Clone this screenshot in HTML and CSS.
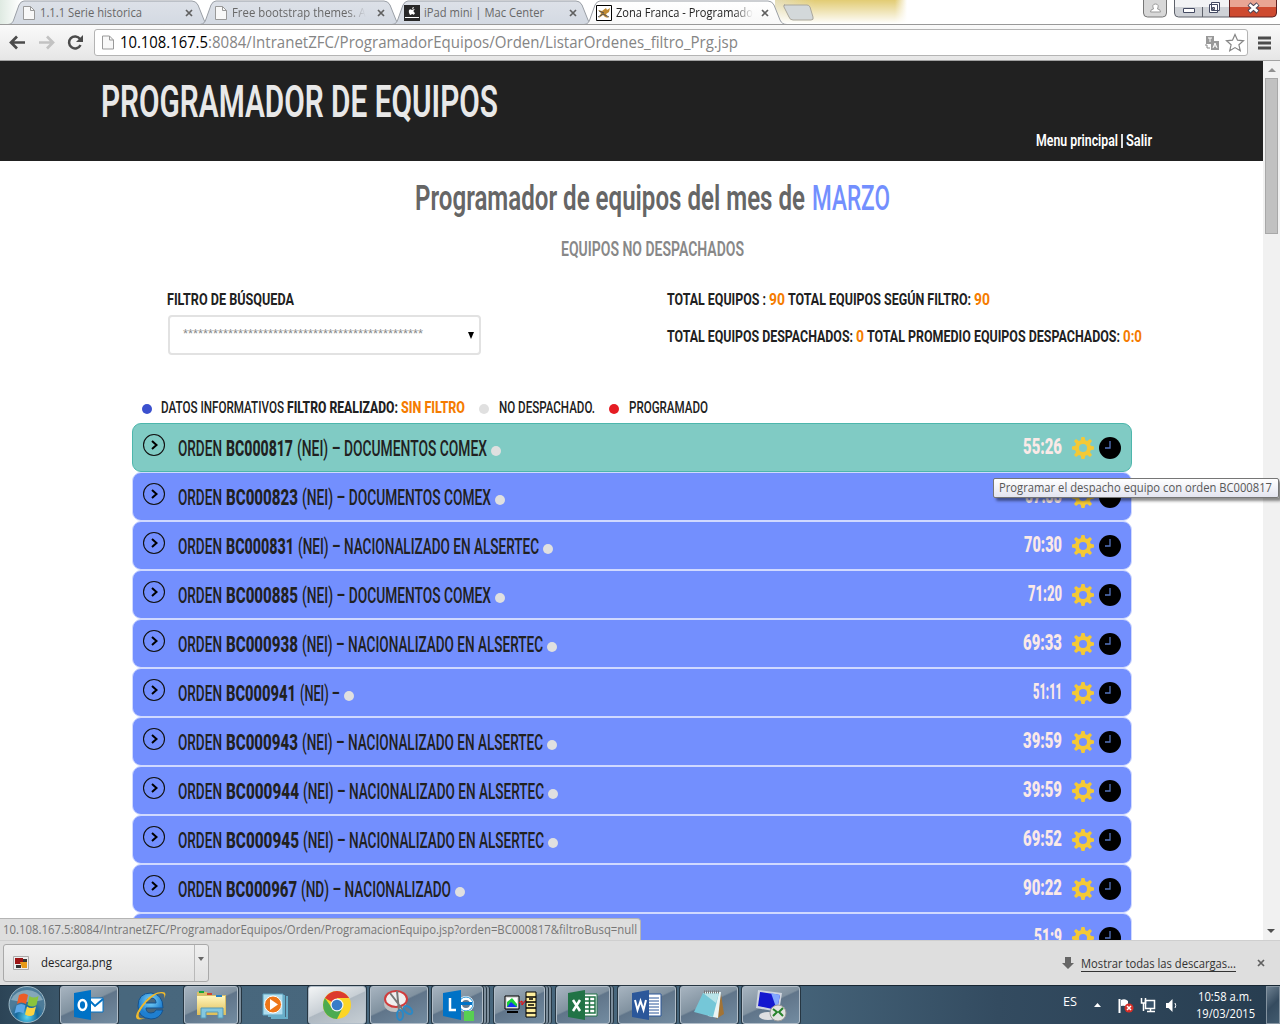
FILE: index.html
```html
<!DOCTYPE html>
<html lang="es">
<head>
<meta charset="utf-8">
<title>Zona Franca - Programador de equipos</title>
<link rel="stylesheet" href="styles.css">
</head>
<body>
<svg class="defs" width="0" height="0">
  <defs>
    <linearGradient id="tabOff" x2="0" y2="1"><stop stop-color="#dde1e8"/><stop offset="1" stop-color="#d3d9e2"/></linearGradient>
    <linearGradient id="tabOn" x2="0" y2="1"><stop stop-color="#ffffff"/><stop offset="1" stop-color="#f8f8f8"/></linearGradient>
    <linearGradient id="gold" x2="0" y2="1"><stop stop-color="#fff6bd"/><stop offset="1" stop-color="#dfbd56"/></linearGradient>
    <radialGradient id="orb" cy=".85"><stop stop-color="#59d5f2"/><stop offset=".6" stop-color="#17699c"/><stop offset="1" stop-color="#4d7b98"/></radialGradient>
    <radialGradient id="ie" cy=".3"><stop stop-color="#7fd8fb"/><stop offset="1" stop-color="#1f7fd0"/></radialGradient>
    <symbol id="page" viewBox="0 0 12 14"><path d="M.5.5h7l4 4v9H.5z" fill="#f8f8f8" stroke="#999"/><path d="M7.5.5v4h4" fill="none" stroke="#999"/></symbol>
    <symbol id="x" viewBox="0 0 8 8"><path d="M1 1l6 6M7 1L1 7" stroke="#606060" stroke-width="1.7"/></symbol>
    <symbol id="tabshape" viewBox="0 0 206 25"><path d="M0 24.5C4 24 5 22 6 19L11 5Q13 1 16 1H184Q188 1 190 5L196 20Q198 24.5 203 24.5" stroke="#9a9fa6"/></symbol>
    <symbol id="arrow" viewBox="0 0 24 24"><circle cx="12" cy="12" r="10.5" fill="none" stroke="#111" stroke-width="1.1"/><path d="M10 8l4.5 4-4.5 4" fill="none" stroke="#000" stroke-width="2"/></symbol>
    <symbol id="gear" viewBox="-11 -11 22 22"><path fill="#f4c936" fill-rule="evenodd" d="M-1.500-11H1.500L2.300-7.700 4.200-7 7-9 9-7 7-4.200 7.700-2.300 11-1.500V1.500L7.700 2.300 7 4.200 9 7 7 9 4.200 7 2.300 7.700 1.500 11H-1.500L-2.300 7.700-4.200 7-7 9-9 7-7 4.200-7.700 2.300-11 1.500V-1.500L-7.700-2.300-7-4.200-9-7-7-9-4.200-7-2.300-7.700ZM4 0A4 4 0 1 0-4 0 4 4 0 1 0 4 0Z"/></symbol>
    <symbol id="clock" viewBox="0 0 22 22"><circle cx="11" cy="11" r="11"/><path d="M11 4v7H6" fill="none" stroke="currentColor" stroke-width="1.3"/></symbol>
  </defs>
</svg>
<div class="window">
  <header class="tabstrip">
    <div class="tab"><svg class="shape" width="206" height="25"><use href="#tabshape"/></svg><div class="tab-body"><svg width="12" height="14"><use href="#page"/></svg><span class="fit" data-w="102">1.1.1 Serie historica</span><svg class="close" width="8" height="8"><use href="#x"/></svg></div></div>
    <div class="tab"><svg class="shape" width="206" height="25"><use href="#tabshape"/></svg><div class="tab-body"><svg width="12" height="14"><use href="#page"/></svg><span class="fit fade" data-w="134">Free bootstrap themes. A</span><svg class="close" width="8" height="8"><use href="#x"/></svg></div></div>
    <div class="tab"><svg class="shape" width="206" height="25"><use href="#tabshape"/></svg><div class="tab-body wide-icon"><svg width="16" height="16"><path fill="#282828" d="M0 0h16v16H0z"/><path fill="#fff" d="M8 5c-3-2-4 1-2.500 4 1 2 2 0 2.500 0s2 2 3-1C9 7 9 5 11 5 10 3.500 9 4.500 8 5zM8 4q0-2 2-2 0 2-2 2zM1 12h14v1H1z"/></svg><span class="fit" data-w="120">iPad mini | Mac Center</span><svg class="close" width="8" height="8"><use href="#x"/></svg></div></div>
    <div class="tab active"><svg class="shape" width="206" height="25"><use href="#tabshape"/></svg><div class="tab-body wide-icon"><svg width="16" height="16"><path fill="#fff" stroke="#000" d="M.5.5h15v15H.500z"/><path fill="#c08a32" d="M2 5l4 1 4-3 1 2 3-2-1 4-3 2 2 4-3-1-2-2-4 3 2-5z"/><path d="M2 12l5-3 6 3M3 6l5 2" stroke="#555" fill="none"/></svg><span class="fit fade" data-w="137">Zona Franca - Programado</span><svg class="close" width="8" height="8"><use href="#x"/></svg></div></div>
    <svg class="newtab" width="34" height="25"><path d="M3 5h23q2 0 3 2l3 10q1 3-2 3H12q-3 0-4-3L3 7q-1-2 1-2z" fill="#d3d8da" stroke="#aaa79c"/></svg>
    <div class="glow"></div>
    <svg class="controls" width="151" height="19">
      <path d="M1.500 0v13q0 4 4 4h15q4 0 4-4V0" fill="#d8d8d8" stroke="#777"/><path d="M8.500 12q0-3 3-3-2-5 2-5t2 5q3 0 3 3z" fill="#fff" stroke="#999"/>
      <path d="M32.500 0v13q0 4 4 4h51V0z" fill="#cfd2d7" stroke="#5e626b"/><path d="M60.500 0v17" stroke="#5e626b"/><path d="M33 0h54v7H33z" fill="#f2f3f5"/>
      <path d="M87.500 0v17h43q4 0 4-4V0z" fill="#ce4a30" stroke="#5e2020"/><path d="M88 0h46v7H88z" fill="#e9a594"/>
      <path d="M41.500 8.500h11v4h-11z" fill="#fff" stroke="#444a62"/><path d="M69.500 2.500h8v8h-8zM67.500 4.500h8v8h-8z" fill="#fff" stroke="#444a62"/><path d="M70.500 7.500h2v2h-2z" fill="#aaa" stroke="#444a62"/>
      <path d="M107 4l9 8M116 4l-9 8" stroke="#4b4557" stroke-width="4.500"/><path d="M107.500 4.500l8 7M115.500 4.500l-8 7" stroke="#fff" stroke-width="2.500"/>
    </svg>
  </header>
  <nav class="toolbar">
    <svg class="navicons" width="86" height="34"><path d="M25 16.500H12M17 10.500l-6 6 6 6" fill="none" stroke="#4b4b4b" stroke-width="2.700"/><path d="M39 16.500h13M47 10.500l6 6-6 6" fill="none" stroke="#c2c2c2" stroke-width="2.700"/><path d="M80 13a6 6 0 1 0 .5 6" fill="none" stroke="#4b4b4b" stroke-width="2.500"/><path d="M83 9v7h-7z" fill="#4b4b4b"/></svg>
    <div class="address">
      <svg width="12" height="15"><use href="#page"/></svg>
      <div class="url"><span class="fit host" data-w="88">10.108.167.5</span><span class="fit" data-w="530">:8084/IntranetZFC/ProgramadorEquipos/Orden/ListarOrdenes_filtro_Prg.jsp</span></div>
      <svg class="addr-icons" width="42" height="20"><path d="M2 3h8v8H2zM7 8h8v9H7z" fill="#999"/><path d="M4 5h4M6 5v4M9 15l2-5 2 5M10 13h2" stroke="#fff" fill="none"/><path d="M1 12h2v3h3" stroke="#888" fill="none"/><path d="M31 1.500l2.500 5.700 6 .6-4.600 4 1.400 6L31 14.600l-5.300 3.200 1.400-6-4.600-4 6-.6z" fill="#fff" stroke="#858585" stroke-width="1.200"/></svg>
    </div>
    <svg width="13" height="14"><path d="M0 2h13M0 7h13M0 12h13" stroke="#4c4c4c" stroke-width="2.800"/></svg>
  </nav>

  <main class="viewport">
    <div class="page">
      <div class="banner">
        <h1 class="fit" data-w="397">PROGRAMADOR DE EQUIPOS</h1>
        <div class="menu"><span class="fit" data-w="82">Menu principal</span><i></i><span class="fit" data-w="26">Salir</span></div>
      </div>
      <h2 class="month"><span class="fit" data-w="390">Programador de equipos del mes de</span><span class="fit blue" data-w="78">MARZO</span></h2>
      <h3 class="subtitle"><span class="fit" data-w="183">EQUIPOS NO DESPACHADOS</span></h3>
      <section class="summary">
        <div class="filter">
          <span class="fit" data-w="127">FILTRO DE BÚSQUEDA</span>
          <div class="select"><span class="fit" data-w="240">************************************************</span><svg width="6" height="7"><path d="M0 0h6L3 7z"/></svg></div>
        </div>
        <div class="totals">
          <p><span class="fit" data-w="99">TOTAL EQUIPOS :</span><span class="fit orange" data-w="16">90</span><span class="fit" data-w="183">TOTAL EQUIPOS SEGÚN FILTRO:</span><span class="fit orange" data-w="16">90</span></p>
          <p><span class="fit" data-w="186">TOTAL EQUIPOS DESPACHADOS:</span><span class="fit orange" data-w="8">0</span><span class="fit" data-w="253">TOTAL PROMEDIO EQUIPOS DESPACHADOS:</span><span class="fit orange" data-w="19">0:0</span></p>
        </div>
      </section>
      <div class="legend">
        <b class="dot info"></b><span class="fit" data-w="123">DATOS INFORMATIVOS</span><span class="fit strong" data-w="111">FILTRO REALIZADO:</span><span class="fit strong orange" data-w="64">SIN FILTRO</span>
        <b class="dot none"></b><span class="fit" data-w="96">NO DESPACHADO.</span>
        <b class="dot done"></b><span class="fit" data-w="79">PROGRAMADO</span>
      </div>
      <div class="orders" id="orders"></div>
    </div>
    <div class="scrollbar"><svg width="17" height="17"><path d="M5 11h8L9 7z" fill="#909090"/></svg><div class="thumb"></div><svg class="down" width="17" height="17"><path d="M4 6h8l-4 4z" fill="#505050"/></svg></div>
    <div class="status"><span class="fit" data-w="634">10.108.167.5:8084/IntranetZFC/ProgramadorEquipos/Orden/ProgramacionEquipo.jsp?orden=BC000817&amp;filtroBusq=null</span></div>
    <div class="tooltip"><span class="fit" data-w="273">Programar el despacho equipo con orden BC000817</span></div>
  </main>

  <div class="downloads">
    <div class="download"><svg width="16" height="14"><path d="M.5.5h15v13H.500z" fill="#eee" stroke="#aaa"/><path d="M2 2h8v6H2z" fill="#9c1414"/><path d="M7 6h7v6H9z" fill="#e79a19"/><path d="M3 9h5v3H3zM10 3h4v3h-4z" fill="#333"/></svg><span class="fit" data-w="71">descarga.png</span><div class="split"><svg width="6" height="4"><path d="M0 0h6L3 4z" fill="#666"/></svg></div></div>
    <div class="showall"><svg width="12" height="12"><path d="M3 0h6v6h3l-6 6-6-6h3z" fill="#666"/></svg><span class="fit link" data-w="155">Mostrar todas las descargas...</span><svg class="closebar" width="8" height="8"><use href="#x"/></svg></div>
  </div>

  <footer class="taskbar">
    <svg class="start" width="60" height="39" viewBox="0 985 60 39"><circle cx="27" cy="1003.500" r="18" fill="url(#orb)" stroke="#9fb9c6"/><path d="M11 999a17 15 0 0 1 32 0q-16 4-32 0z" fill="#b5ccd6" opacity=".55"/><path d="M19 994q5-3 9 0l-2 9q-5-3-9 0z" fill="#ee5d28"/><path d="M29.500 995q4 3 9 0l-2 9q-4 3-9 0z" fill="#8bc43c"/><path d="M16.500 1004.500q5-3 9 0l-2 8q-4-3-9 0z" fill="#5da8e8"/><path d="M27 1005.500q4 3 9 0l-2 8q-4 3-9 0z" fill="#fbd342"/></svg>
    <div class="apps">
      <div class="app"><div class="btn"><svg width="32" height="32"><path d="M14 9h16v14H14z" fill="#fff" stroke="#0072c6"/><path d="M15 10l7 7 8-7" fill="none" stroke="#0072c6" stroke-width="2"/><path d="M1 4l17-3v30L1 28z" fill="#0072c6"/><ellipse cx="9.500" cy="16" rx="3.800" ry="5" fill="none" stroke="#fff" stroke-width="2.500"/></svg></div></div>
      <div class="app"><div class="btn plain"><svg class="explorer" width="34" height="34"><path d="M29 20H12q0 5 5 5 4 0 5-3h7q-3 9-12 9-13-1-13-13Q4 5 17 5q12 1 12 15zM12 15h10q0-5-5-5t-5 5z" fill="url(#ie)" stroke="#14538f"/><path d="M30 11q4-8-3-7-7 0-15 8Q3 22 2 28q0 6 9 2-8 2-6-5Q12 12 23 6q9-3 7 5z" fill="#efb92d"/></svg></div></div>
      <div class="app"><div class="btn stack"><svg width="34" height="32"><path d="M3 3h10l2 3h17v20H3z" fill="#d9bf68"/><path d="M3 7h28v19H3z" fill="url(#gold)"/><path d="M5 2h5v2H5z" fill="#15a53a"/><path d="M13 4h5v2h-5z" fill="#cf4530"/><path d="M22 6h6v2h-6z" fill="#2681c6"/><path d="M7 29V19h22v10h-5v-6H12v6z" fill="#83c7df" stroke="#5599b8"/></svg></div></div>
      <div class="app"><div class="btn plain"><svg width="30" height="28"><path d="M3 3h20v21H3z" fill="#afdeef" stroke="#5ca1be"/><path d="M24 4v21H8M27 5v22H11" fill="none" stroke="#68aec9" stroke-width="2"/><circle cx="13" cy="13.500" r="8.500" fill="#ee7618" stroke="#fff"/><path d="M10 8l8 5.500-8 5.500z" fill="#fff"/></svg></div></div>
      <div class="app"><div class="btn lit"><svg width="30" height="30"><circle cx="15" cy="15" r="14" fill="#fcd526"/><path d="M15 15L2.900 8A14 14 0 0 1 27.100 8H15z" fill="#dc3b2d"/><path d="M2.900 8A14 14 0 0 0 15 29l5-10-10-1z" fill="#4cab50"/><circle cx="15" cy="15" r="6.500" fill="#f5f5f5"/><circle cx="15" cy="15" r="5.300" fill="#377cc8"/></svg></div></div>
      <div class="app"><div class="btn"><svg width="34" height="34"><ellipse cx="13" cy="16" rx="11" ry="8" fill="#c2c2c2"/><ellipse cx="14" cy="11" rx="11" ry="8" fill="#f0efef" stroke="#d03d3d" stroke-width="2"/><path d="M8 5l13 17M15 3l2 20" stroke="#777" stroke-width="2"/><ellipse cx="18" cy="27" rx="3" ry="5" fill="none" stroke="#2989c7" stroke-width="2"/><ellipse cx="26" cy="22" rx="3" ry="5" fill="none" stroke="#2989c7" stroke-width="2" transform="rotate(-48 26 22)"/></svg></div></div>
      <div class="app"><div class="btn stack3"><svg width="34" height="34"><circle cx="25" cy="16" r="6" fill="none" stroke="#fff" stroke-width="4"/><path d="M19 14h12v3H19" fill="#0072c6"/><circle cx="25" cy="16" r="7" fill="none" stroke="#2692d4"/><path d="M2 5l18-3v30L2 28z" fill="#0072c6"/><path d="M9 10v12h6" fill="none" stroke="#fff" stroke-width="2.500"/><path d="M23 23h10v10H23z" fill="#58cf52"/></svg></div></div>
      <div class="app"><div class="btn stack3"><svg width="34" height="30"><path d="M2 6h14v13H2z" fill="#ddd" stroke="#000"/><path d="M4 8h10v9H4z" fill="#fff"/><path d="M4 17V12l5-4 5 6v3z" fill="#1bd03c"/><path d="M8 12l6 5H4z" fill="#1232f5"/><path d="M4 22h11" stroke="#000" stroke-width="2"/><path d="M16 13l3-2v4l4-5" fill="none" stroke="red"/><path d="M23 2h10v25H23z" fill="#ffef9e" stroke="#000"/><path d="M23 7h10M23 12h10M23 18h10M23 23h10M26 9h4M25 15h6" stroke="#000" stroke-width="1.500"/></svg></div></div>
      <div class="app"><div class="btn stack"><svg width="32" height="32"><path d="M15 5h15v22H15z" fill="#fff" stroke="#217346"/><path d="M17 8h11v16H17zM17 12h11M17 16h11M17 20h11M22.500 8v16" stroke="#217346" stroke-width="1.500" fill="none"/><path d="M1 4l17-3v30L1 28z" fill="#217346"/><path d="M6 11l7 11M13 11L6 22" stroke="#fff" stroke-width="2.500"/></svg></div></div>
      <div class="app"><div class="btn"><svg width="32" height="32"><path d="M15 5h15v22H15z" fill="#fff" stroke="#2b579a"/><path d="M18 9h10M18 12h10M18 15h10M18 18h10M18 21h10M18 24h10" stroke="#2b579a"/><path d="M1 4l17-3v30L1 28z" fill="#2b579a"/><path d="M4 11l2.500 10L9.500 12l3 9L15 11" fill="none" stroke="#fff" stroke-width="2"/></svg></div></div>
      <div class="app"><div class="btn"><svg width="34" height="32"><path d="M29 5l3 20-8 5z" fill="#a27335"/><path d="M12 3h17l-3 26-10-2z" fill="#eaf4f4"/><path d="M11 4h16l-6 24L2 23z" fill="#75c7d8"/><path d="M11 4h16l-3 10z" fill="#b9e3e8"/><path d="M12 3h16" stroke="#777" stroke-width="3" stroke-dasharray="1 1"/></svg></div></div>
      <div class="app"><div class="btn"><svg width="34" height="34"><ellipse cx="14" cy="28" rx="9" ry="4" fill="#dedfe2"/><path d="M4 2l24 3-3 19L2 20z" fill="#d0d6df"/><path d="M6 4l20 3-3 15L4 18z" fill="#1418cf"/><path d="M17 5l9 2-3 15z" fill="#83a8ff"/><circle cx="24" cy="25" r="8" fill="#e2e3df" stroke="#999"/><path d="M19 21l4 3-4 4M29 20l-4 4 4 4" fill="none" stroke="#268229" stroke-width="2"/></svg></div></div>
    </div>
    <div class="tray">
      <span class="fit" data-w="14">ES</span>
      <svg class="trayicons" width="90" height="20"><path d="M5 12h7L8.500 8z" fill="#fff"/><path d="M30.500 4v14" stroke="#fff" stroke-width="2"/><path d="M32 5q4-2 7 1v6q-4-2-7-1z" fill="#fff"/><circle cx="40" cy="13" r="4.500" fill="#d72e27"/><path d="M38 11l4 4M42 11l-4 4" stroke="#fff" stroke-width="1.500"/><path d="M56.500 5.500h9v8h-9zM58 16.500h8M61.500 14v3" stroke="#fff" stroke-width="1.500" fill="#38526a"/><path d="M52.500 3v5h4V3M54.500 8v8" stroke="#fff" stroke-width="1.500" fill="none"/><path d="M77 8h2.500l4-4v13l-4-4H77z" fill="#fff"/><path d="M86 8q1.500 2.500 0 5" stroke="#fff" fill="none"/></svg>
      <div class="datetime"><span class="fit" data-w="54">10:58 a.m.</span><span class="fit" data-w="59">19/03/2015</span></div>
      <div class="desktop"></div>
    </div>
  </footer>
</div>
<script src="app.js"></script>
</body>
</html>
```
FILE: styles.css
```css
* { box-sizing: border-box; }
body { margin: 0; overflow: hidden; font-family: "Open Sans", sans-serif; }
h1, h2, h3, p { margin: 0; }
svg { display: block; flex: none; overflow: visible; }
.defs { position: absolute; }
.fit { display: block; flex: none; }
.window { width: 1280px; height: 1024px; display: flex; flex-direction: column; overflow: hidden; background: #fff; }

.tabstrip { height: 25px; flex: none; display: flex; padding-left: 8px; background: linear-gradient(90deg, #dfeae2 0, #fff 20px, #fff); border-bottom: 1px solid #999; overflow: hidden; }
.tab { width: 192px; height: 25px; flex: none; display: grid; grid-template-columns: 192px; font-size: 11.8px; color: #686868; }
.tab > * { grid-area: 1 / 1; }
.shape { fill: url(#tabOff); }
.active { z-index: 2; color: #222; }
.active .shape { fill: url(#tabOn); }
.tab-body { z-index: 1; display: flex; align-items: flex-start; padding: 6px 7px 0 15px; gap: 5px; }
.wide-icon { padding: 5px 7px 0 12px; gap: 4px; }
.wide-icon .fit, .wide-icon .close { margin-top: 1px; }
.tab .close { margin: 3px 0 0 auto; }
.tab .wide-icon .close { margin-top: 4px; }
.fade { -webkit-mask-image: linear-gradient(90deg, #000 86%, transparent); mask-image: linear-gradient(90deg, #000 86%, transparent); }
.newtab { margin-left: 5px; z-index: 1; }
.glow { width: 340px; height: 24px; margin-left: -40px; background: linear-gradient(180deg, rgba(255,255,255,0), #fff), linear-gradient(90deg, #e5ddb5 0, #e2cc74 40px, #e2cc74 120px, #fff 132px); }
.controls { margin-left: auto; margin-right: -13px; }

.toolbar { height: 36px; flex: none; display: flex; align-items: center; padding-right: 9px; background: linear-gradient(#fafafa, #e6e6e6); border-bottom: 1px solid #a2a2a2; }
.navicons { margin-right: 8px; }
.address { height: 27px; flex: 1; margin-right: 10px; display: flex; align-items: center; padding: 0 1px 0 7px; border: 1px solid #b4b4b4; border-radius: 3px; background: #fff; }
.url { display: flex; margin-left: 6px; font-size: 15.500px; color: #858585; }
.host { color: #000; }
.addr-icons { margin-left: auto; }

.viewport { position: relative; height: 879px; flex: none; display: flex; overflow: hidden; }
.page { width: 1263px; font-family: Roboto, sans-serif; color: #212121; overflow: hidden; }
.banner { height: 100px; background: #212121; color: #e8e8e8; padding: 13px 111px 0 101px; display: flex; flex-direction: column; }
.banner h1 { font-size: 45px; font-weight: 600; height: 55px; }
.menu { align-self: flex-end; display: flex; gap: 3px; margin-top: 1px; font-size: 16.500px; font-weight: 600; color: #fff; }
.menu i { width: 2px; height: 14px; margin: 4px 0 0; background: #ddd; }
.month { display: flex; gap: 7px; padding: 16px 0 0 415px; height: 68px; font-size: 34.500px; font-weight: 600; color: #666; }
.blue { color: #738ffe; font-weight: 500; }
.subtitle { padding: 7px 0 0 561px; height: 55px; font-size: 21px; font-weight: 600; color: #888; }
.summary { display: flex; padding: 5px 0 0 167px; height: 113px; font-size: 17px; font-weight: 700; }
.filter { width: 500px; }
.select { width: 313px; height: 40px; margin: 6px 0 0 1px; padding: 0 5px 0 13px; border: 2px solid #e2e2e2; border-radius: 4px; display: flex; align-items: center; justify-content: space-between; font: 400 12px "Liberation Sans", sans-serif; }
.select .fit { color: #8a8a8a; margin-top: -2px; }
.totals p { display: flex; gap: 3px; height: 37px; }
.orange { color: #f57c00; }
.legend { height: 25px; padding: 0 0 0 142px; display: flex; gap: 3px; font-size: 17px; font-weight: 500; }
.legend .strong, .label .strong { font-weight: 800; }
.dot { display: block; flex: none; width: 10px; height: 10px; border-radius: 50%; background: #e0e0e0; }
.legend .dot { margin: 7px 7px 0 11px; }
.legend .info { background: #3b50ce; margin-left: 0; margin-right: 6px; }
.legend .done { background: #e51c23; }
.orders { margin: 1px 0 0 132px; width: 1000px; background: #fff; }
.order { height: 49px; display: flex; padding: 10px 10px 0; border: 1px solid #d0d9ff; border-radius: 9px; background: #738ffe; font-size: 21.500px; color: #212121; }
.order.hover { background: #80cbc4; border-color: #4db6ac; }
.order .label { display: flex; gap: 4px; margin: 2px 0 0 12px; font-weight: 500; }
.label .dot { margin: 10px 0 0 0; }
.time { margin-left: auto; color: #fbe9e7; font-weight: 900; }
.gear { margin: 3px 5px 0 10px; }
.clock { margin-top: 3px; color: #5575c0; }
.order > svg:first-child { margin-top: -1px; margin-left: -1px; }
.scrollbar { width: 17px; flex: none; background: #f1f1f1; display: flex; flex-direction: column; }
.thumb { height: 156px; margin: 0 2px; background: #c1c1c1; border: 1px solid #a8a8a8; }
.down { margin-top: auto; }
.status { position: absolute; left: 0; bottom: 0; width: 641px; height: 22px; padding: 4px 3px 0; background: #dedede; border: solid #b4b4b4; border-width: 1px 1px 0 0; border-radius: 0 4px 0 0; font-size: 11.800px; color: #767676; }
.tooltip { position: absolute; left: 993px; top: 417px; width: 286px; height: 20px; padding: 2px 5px; background: linear-gradient(#fff, #e4e5f0); border: 1px solid #767676; border-radius: 2px; box-shadow: 3px 3px 3px rgba(0,0,0,.45); font-size: 11.800px; color: #575757; }

.downloads { height: 45px; flex: none; display: flex; justify-content: space-between; padding: 3px 15px 0 3px; background: #dedede; border-top: 1px solid #cfcfcf; font-size: 11.800px; color: #222; }
.download { width: 206px; height: 38px; display: flex; align-items: center; padding-left: 9px; gap: 12px; border: 1px solid #a9a9a9; border-radius: 3px; background: linear-gradient(#efefef, #e1e1e1); }
.split { width: 14px; height: 36px; margin-left: auto; border-left: 1px solid #b9b9b9; padding: 12px 0 0 3px; }
.showall { height: 38px; display: flex; align-items: center; gap: 7px; }
.link { border-bottom: 1px solid #333; color: #333; margin-top: 2px; }
.closebar { margin-left: 14px; }

.taskbar { height: 39px; flex: none; display: flex; background: linear-gradient(90deg, #2c4456 0, #48677d 9%, #47667c 60%, #334b60 78%, #273d50); border-top: 1px solid #172632; }
.apps { display: flex; }
.app { width: 62px; height: 38px; }
.btn { width: 58px; height: 38px; display: flex; align-items: center; justify-content: center; border: 1px solid #b1bdc8; border-radius: 3px; background: linear-gradient(155deg, #a7b4c0 0, #8192a0 45%, #60758a 48%, #738ca1); box-shadow: 0 0 0 1px #263642; }
.plain { background: none; border-color: transparent; box-shadow: none; }
.lit { background: linear-gradient(155deg, #f3f5f6, #c8cfd5 48%, #aeb8c1 50%, #c6ced4); }
.stack { width: 54px; box-shadow: 0 0 0 1px #263642, 3px 0 0 #7d8e9c, 4px 0 0 #263642; }
.stack3 { width: 51px; box-shadow: 0 0 0 1px #263642, 3px 0 0 #7d8e9c, 4px 0 0 #263642, 6px 0 0 #7d8e9c, 7px 0 0 #263642; }
.tray { margin-left: auto; display: flex; align-items: flex-start; color: #fff; font-size: 12px; }
.tray > .fit { margin-top: 9px; }
.trayicons { margin: 9px 0 0 12px; }
.datetime { width: 60px; margin: 4px 11px 0 16px; display: flex; flex-direction: column; align-items: center; gap: 3px; }
.desktop { width: 14px; height: 38px; border: 1px solid #8493a0; background: linear-gradient(135deg, #6e8191, #354b5f 50%, #425b6f); }
```
FILE: app.js
```js
const NS = 'http://www.w3.org/2000/svg';

// [order, width, description, width, time, width]
const orders = [
  ['BC000817', 67, '(NEI) – DOCUMENTOS COMEX', 190, '55:26', 39],
  ['BC000823', 72, '(NEI) – DOCUMENTOS COMEX', 189, '57:33', 37],
  ['BC000831', 68, '(NEI) – NACIONALIZADO EN ALSERTEC', 241, '70:30', 38],
  ['BC000885', 72, '(NEI) – DOCUMENTOS COMEX', 189, '71:20', 34],
  ['BC000938', 72, '(NEI) – NACIONALIZADO EN ALSERTEC', 241, '69:33', 39],
  ['BC000941', 70, '(NEI) –', 40, '51:11', 29],
  ['BC000943', 72, '(NEI) – NACIONALIZADO EN ALSERTEC', 241, '39:59', 39],
  ['BC000944', 73, '(NEI) – NACIONALIZADO EN ALSERTEC', 241, '39:59', 39],
  ['BC000945', 73, '(NEI) – NACIONALIZADO EN ALSERTEC', 241, '69:52', 39],
  ['BC000967', 71, '(ND) – NACIONALIZADO', 150, '90:22', 39],
  ['', 0, '', 0, '51:9', 28]
];

document.getElementById('orders').innerHTML = orders.map(([id, iw, text, tw, time, w], i) => `
  <div class="order${i === 0 ? ' hover' : ''}">
    <svg width="24" height="24"><use href="#arrow"/></svg>
    ${id ? `<div class="label"><span class="fit" data-w="44">ORDEN</span><span class="fit strong" data-w="${iw}">${id}</span><span class="fit" data-w="${tw}">${text}</span><b class="dot"></b></div>` : ''}
    <span class="fit time" data-w="${w}">${time}</span>
    <svg class="gear" width="22" height="22"><use href="#gear"/></svg>
    <svg class="clock" width="22" height="22"><use href="#clock"/></svg>
  </div>`).join('');

document.querySelectorAll('.fit').forEach(el => {
  const size = parseFloat(getComputedStyle(el).fontSize);
  const svg = document.createElementNS(NS, 'svg');
  const text = document.createElementNS(NS, 'text');
  svg.setAttribute('width', el.dataset.w);
  svg.setAttribute('height', Math.round(size * 1.2));
  text.setAttribute('y', Math.round(size * 0.95));
  text.setAttribute('fill', 'currentColor');
  text.setAttribute('textLength', el.dataset.w);
  text.setAttribute('lengthAdjust', 'spacingAndGlyphs');
  text.textContent = el.textContent;
  svg.append(text);
  el.replaceChildren(svg);
});
```
